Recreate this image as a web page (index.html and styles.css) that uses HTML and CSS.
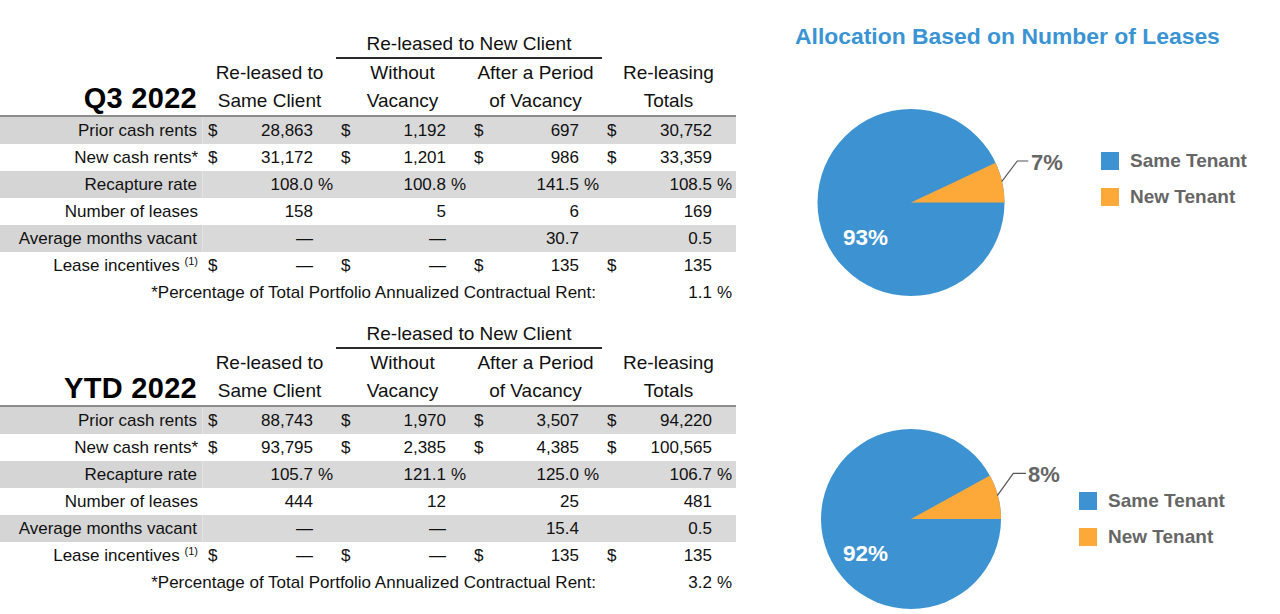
FILE: index.html
```html
<!DOCTYPE html>
<html lang="en">
<head>
<meta charset="utf-8">
<title>Re-leasing Results</title>
<link rel="stylesheet" href="styles.css">
</head>
<body>
<main class="page">
  <div class="tables">
    <section class="lease-table">
      <div class="row group-row"><div class="group-title">Re-leased to New Client</div></div>
      <div class="row head-row">
        <div class="label"></div>
        <div class="head">Re-leased to</div>
        <div class="head">Without</div>
        <div class="head">After a Period</div>
        <div class="head">Re-leasing</div>
      </div>
      <div class="row head-row head-last">
        <div class="label period">Q3 2022</div>
        <div class="head">Same Client</div>
        <div class="head">Vacancy</div>
        <div class="head">of Vacancy</div>
        <div class="head">Totals</div>
      </div>
      <div class="row data shaded">
        <div class="label">Prior cash rents</div>
        <div class="val"><span class="cur">$</span><span class="num">28,863</span></div>
        <div class="val"><span class="cur">$</span><span class="num">1,192</span></div>
        <div class="val"><span class="cur">$</span><span class="num">697</span></div>
        <div class="val"><span class="cur">$</span><span class="num">30,752</span></div>
      </div>
      <div class="row data">
        <div class="label">New cash rents*</div>
        <div class="val"><span class="cur">$</span><span class="num">31,172</span></div>
        <div class="val"><span class="cur">$</span><span class="num">1,201</span></div>
        <div class="val"><span class="cur">$</span><span class="num">986</span></div>
        <div class="val"><span class="cur">$</span><span class="num">33,359</span></div>
      </div>
      <div class="row data shaded">
        <div class="label">Recapture rate</div>
        <div class="val"><span class="cur"></span><span class="num">108.0</span><span class="pct">%</span></div>
        <div class="val"><span class="cur"></span><span class="num">100.8</span><span class="pct">%</span></div>
        <div class="val"><span class="cur"></span><span class="num">141.5</span><span class="pct">%</span></div>
        <div class="val"><span class="cur"></span><span class="num">108.5</span><span class="pct">%</span></div>
      </div>
      <div class="row data">
        <div class="label">Number of leases</div>
        <div class="val"><span class="cur"></span><span class="num">158</span></div>
        <div class="val"><span class="cur"></span><span class="num">5</span></div>
        <div class="val"><span class="cur"></span><span class="num">6</span></div>
        <div class="val"><span class="cur"></span><span class="num">169</span></div>
      </div>
      <div class="row data shaded">
        <div class="label">Average months vacant</div>
        <div class="val"><span class="cur"></span><span class="num">—</span></div>
        <div class="val"><span class="cur"></span><span class="num">—</span></div>
        <div class="val"><span class="cur"></span><span class="num">30.7</span></div>
        <div class="val"><span class="cur"></span><span class="num">0.5</span></div>
      </div>
      <div class="row data">
        <div class="label">Lease incentives <sup>(1)</sup></div>
        <div class="val"><span class="cur">$</span><span class="num">—</span></div>
        <div class="val"><span class="cur">$</span><span class="num">—</span></div>
        <div class="val"><span class="cur">$</span><span class="num">135</span></div>
        <div class="val"><span class="cur">$</span><span class="num">135</span></div>
      </div>
      <div class="row data foot">
        <div class="note">*Percentage of Total Portfolio Annualized Contractual Rent:</div>
        <div class="val"><span class="cur"></span><span class="num">1.1</span><span class="pct">%</span></div>
      </div>
    </section>

    <section class="lease-table second">
      <div class="row group-row"><div class="group-title">Re-leased to New Client</div></div>
      <div class="row head-row">
        <div class="label"></div>
        <div class="head">Re-leased to</div>
        <div class="head">Without</div>
        <div class="head">After a Period</div>
        <div class="head">Re-leasing</div>
      </div>
      <div class="row head-row head-last">
        <div class="label period">YTD 2022</div>
        <div class="head">Same Client</div>
        <div class="head">Vacancy</div>
        <div class="head">of Vacancy</div>
        <div class="head">Totals</div>
      </div>
      <div class="row data shaded">
        <div class="label">Prior cash rents</div>
        <div class="val"><span class="cur">$</span><span class="num">88,743</span></div>
        <div class="val"><span class="cur">$</span><span class="num">1,970</span></div>
        <div class="val"><span class="cur">$</span><span class="num">3,507</span></div>
        <div class="val"><span class="cur">$</span><span class="num">94,220</span></div>
      </div>
      <div class="row data">
        <div class="label">New cash rents*</div>
        <div class="val"><span class="cur">$</span><span class="num">93,795</span></div>
        <div class="val"><span class="cur">$</span><span class="num">2,385</span></div>
        <div class="val"><span class="cur">$</span><span class="num">4,385</span></div>
        <div class="val"><span class="cur">$</span><span class="num">100,565</span></div>
      </div>
      <div class="row data shaded">
        <div class="label">Recapture rate</div>
        <div class="val"><span class="cur"></span><span class="num">105.7</span><span class="pct">%</span></div>
        <div class="val"><span class="cur"></span><span class="num">121.1</span><span class="pct">%</span></div>
        <div class="val"><span class="cur"></span><span class="num">125.0</span><span class="pct">%</span></div>
        <div class="val"><span class="cur"></span><span class="num">106.7</span><span class="pct">%</span></div>
      </div>
      <div class="row data">
        <div class="label">Number of leases</div>
        <div class="val"><span class="cur"></span><span class="num">444</span></div>
        <div class="val"><span class="cur"></span><span class="num">12</span></div>
        <div class="val"><span class="cur"></span><span class="num">25</span></div>
        <div class="val"><span class="cur"></span><span class="num">481</span></div>
      </div>
      <div class="row data shaded">
        <div class="label">Average months vacant</div>
        <div class="val"><span class="cur"></span><span class="num">—</span></div>
        <div class="val"><span class="cur"></span><span class="num">—</span></div>
        <div class="val"><span class="cur"></span><span class="num">15.4</span></div>
        <div class="val"><span class="cur"></span><span class="num">0.5</span></div>
      </div>
      <div class="row data">
        <div class="label">Lease incentives <sup>(1)</sup></div>
        <div class="val"><span class="cur">$</span><span class="num">—</span></div>
        <div class="val"><span class="cur">$</span><span class="num">—</span></div>
        <div class="val"><span class="cur">$</span><span class="num">135</span></div>
        <div class="val"><span class="cur">$</span><span class="num">135</span></div>
      </div>
      <div class="row data foot">
        <div class="note">*Percentage of Total Portfolio Annualized Contractual Rent:</div>
        <div class="val"><span class="cur"></span><span class="num">3.2</span><span class="pct">%</span></div>
      </div>
    </section>
  </div>

  <aside class="charts">
    <h2 class="chart-title">Allocation Based on Number of Leases</h2>

    <figure class="chart chart-q3">
      <svg class="pie" width="270" height="200" viewBox="0 0 270 200">
        <circle cx="111" cy="97.5" r="93.5" fill="#3d93d1"/>
        <path d="M111 97.5 L204.5 97.5 A93.5 93.5 0 0 0 195.6 57.7 Z" fill="#fca93a"/>
        <polyline points="201.7,76.7 217.3,56 228.3,56" fill="none" stroke="#555" stroke-width="1.2"/>
        <text x="231" y="65" class="pie-out">7%</text>
        <text x="43" y="139.5" class="pie-in">93%</text>
      </svg>
      <ul class="legend">
        <li class="legend-item"><span class="swatch same"></span>Same Tenant</li>
        <li class="legend-item"><span class="swatch new"></span>New Tenant</li>
      </ul>
    </figure>

    <figure class="chart chart-ytd">
      <svg class="pie" width="270" height="189" viewBox="0 0 270 189">
        <circle cx="111" cy="94" r="90" fill="#3d93d1"/>
        <path d="M111 94 L201 94 A90 90 0 0 0 189.9 50.6 Z" fill="#fca93a"/>
        <polyline points="197.3,70.7 213.3,48.3 226,48.3" fill="none" stroke="#555" stroke-width="1.2"/>
        <text x="228" y="57" class="pie-out">8%</text>
        <text x="43" y="136" class="pie-in">92%</text>
      </svg>
      <ul class="legend">
        <li class="legend-item"><span class="swatch same"></span>Same Tenant</li>
        <li class="legend-item"><span class="swatch new"></span>New Tenant</li>
      </ul>
    </figure>
  </aside>
</main>
</body>
</html>
```

FILE: styles.css
```css
html, body {
  margin: 0;
  padding: 0;
  background: #ffffff;
}

body {
  font-family: "Liberation Sans", Arial, sans-serif;
  color: #111111;
  overflow: hidden;
  width: 1280px;
  height: 614px;
}

.page {
  display: flex;
  align-items: flex-start;
}

/* ---------- Tables ---------- */
.tables {
  width: 736px;
  padding-top: 30px;
  display: flex;
  flex-direction: column;
  gap: 14px;
}

.lease-table {
  display: flex;
  flex-direction: column;
}

.row {
  display: grid;
  grid-template-columns: 203px repeat(4, 133px);
}

.group-title {
  grid-column: 3 / span 2;
  font-size: 19px;
  line-height: 27px;
  text-align: center;
  border-bottom: 2px solid #2b2b2b;
}

.head-row {
  height: 28px;
}

.head {
  font-size: 19px;
  line-height: 28px;
  text-align: center;
  white-space: nowrap;
}

.head-last {
  border-bottom: 2px solid #8c8c8c;
}

.label {
  font-size: 17px;
  line-height: 27px;
  text-align: right;
  padding-right: 5px;
  white-space: nowrap;
}

.label sup {
  font-size: 11px;
  line-height: 0;
  vertical-align: 6px;
}

.period {
  font-size: 29px;
  font-weight: bold;
  line-height: 28px;
  margin-top: -3px;
  padding-right: 6px;
  color: #000000;
}

.head-last .period {
  letter-spacing: 0.3px;
}

.data {
  height: 27px;
  font-size: 17px;
  line-height: 27px;
}

.shaded {
  background: #d9d9d9;
}

.shaded .label {
  background: #d5d5d5;
  border-right: 1px solid #e3e3e3;
}

.val {
  display: grid;
  grid-template-columns: 5px auto 1fr 23px;
  white-space: nowrap;
}

.cur {
  grid-column: 2;
}

.num {
  grid-column: 3;
  text-align: right;
}

.pct {
  grid-column: 4;
  padding-left: 5px;
}

.note {
  grid-column: 1 / span 4;
  text-align: right;
  padding-right: 6px;
  white-space: nowrap;
}

/* ---------- Charts ---------- */
.charts {
  margin-left: 59px;
  padding-top: 22px;
}

.chart-title {
  margin: 0;
  font-size: 22.9px;
  line-height: 28px;
  font-weight: bold;
  color: #3a94d4;
  white-space: nowrap;
}

.chart {
  margin: 0 0 0 5px;
  display: flex;
  align-items: flex-start;
}

.chart-q3 {
  margin-top: 55px;
}

.chart-ytd {
  margin-top: 120px;
}

.pie {
  display: block;
  flex: none;
}

.pie-out {
  font-family: "Liberation Sans", Arial, sans-serif;
  font-weight: bold;
  font-size: 22px;
  fill: #666666;
}

.pie-in {
  font-family: "Liberation Sans", Arial, sans-serif;
  font-weight: bold;
  font-size: 22.5px;
  fill: #ffffff;
}

.legend {
  list-style: none;
  margin: 0;
  padding: 0;
  display: flex;
  flex-direction: column;
  gap: 18px;
}

.chart-q3 .legend {
  margin-left: 31px;
  margin-top: 47px;
}

.chart-ytd .legend {
  margin-left: 9px;
  margin-top: 67px;
}

.legend-item {
  display: flex;
  align-items: center;
  gap: 11px;
  height: 18px;
  font-size: 19px;
  font-weight: bold;
  color: #666666;
  white-space: nowrap;
}

.swatch {
  width: 18px;
  height: 18px;
  flex: none;
}

.swatch.same {
  background: #3d93d1;
}

.swatch.new {
  background: #fca93a;
}
```
